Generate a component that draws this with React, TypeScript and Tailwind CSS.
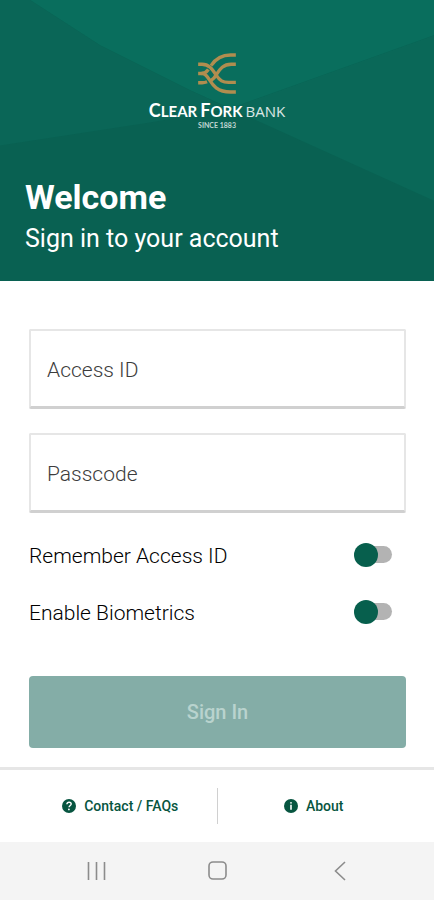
import { useState, type ReactNode } from "react"

type ToggleRowProps = {
  id: string
  label: string
}

function ForkMark() {
  return (
    <svg
      viewBox="0 0 114 124"
      className="h-[41px] w-[38px]"
      fill="none"
      stroke="#b08d4f"
      strokeWidth="10"
      aria-hidden="true"
    >
      <path d="M114 6H98C70 6 53 17 39 38" />
      <path d="M0 34H12C32 34 42 48 54 66C66 84 74 89 92 89H114" />
      <path d="M0 62H12C38 62 32 118 98 118H114" />
      <path d="M114 34H100C76 34 66 48 56 64C50 75 45 80 38 84" />
      <path d="M10 62C20 62 26 57 31 50" />
      <path d="M0 90H12C18 90 22 89 27 87" />
    </svg>
  )
}

function Logo() {
  return (
    <div className="flex flex-col items-center font-[Lato,sans-serif] text-white">
      <ForkMark />
      <p className="mt-[6px] flex items-baseline gap-[3px] text-[15px] leading-5 font-bold">
        <span>
          <span className="text-lg leading-5">C</span>LEAR
        </span>
        <span>
          <span className="text-lg leading-5">F</span>ORK
        </span>
        <span className="font-['Open_Sans',sans-serif] text-[15px] leading-5 font-normal text-white/85">BANK</span>
      </p>
      <p className="text-[7px] leading-2 font-bold text-white/75">SINCE 1883</p>
    </div>
  )
}

function Header() {
  return (
    <header className="relative bg-[#096152]">
      {/* Faceted backdrop */}
      <svg
        viewBox="0 0 434 280"
        preserveAspectRatio="none"
        className="absolute inset-0 h-full w-full"
        aria-hidden="true"
      >
        <path d="M434 35V200L230 108Z" fill="#0a6858" />
        <path d="M30 0H434V35L230 108L190 90L100 45Z" fill="#096e5d" />
        <path d="M0 0H30L100 45L190 90L230 108L150 122L0 145Z" fill="#0a6657" />
      </svg>
      <div className="relative px-[25px] pt-[53px] pb-[22px]">
        <Logo />
        <h1 className="mt-12 text-[34px] leading-10 font-bold text-white">Welcome</h1>
        <p className="mt-0.5 text-[25px] leading-10 text-white">Sign in to your account</p>
      </div>
    </header>
  )
}

function Field({ id, label, type }: { id: string; label: string; type: string }) {
  return (
    <div className="relative">
      <input
        id={id}
        type={type}
        placeholder=" "
        className="peer block h-20 w-full rounded-xs border-2 border-b-[3px] border-[#e6e6e6] border-b-[#d0d0d0] bg-white px-4 text-[21px] text-gray-900 outline-none"
      />
      <label
        htmlFor={id}
        className="pointer-events-none invisible absolute inset-0 flex items-center px-[18px] pt-1 text-[21px] font-light text-[#3c3c3c] peer-placeholder-shown:visible"
      >
        {label}
      </label>
    </div>
  )
}

function ToggleRow({ id, label }: ToggleRowProps) {
  const [on, setOn] = useState(false)

  return (
    <div className="flex h-[57px] items-center justify-between pr-3">
      <label htmlFor={id} className="pt-1 text-[21px] font-light text-black">
        {label}
      </label>
      <span className="relative flex h-6 w-10 items-center">
        <input
          id={id}
          type="checkbox"
          role="switch"
          checked={on}
          onChange={(e) => setOn(e.target.checked)}
          className="peer ml-1 h-[17px] w-[34px] appearance-none rounded-full bg-[#b3b3b3] checked:bg-[#84ada7]"
        />
        <span className="pointer-events-none absolute left-0 size-6 rounded-full bg-[#075f4d] peer-checked:left-4" />
      </span>
    </div>
  )
}

function FooterLink({ href, icon, children }: { href: string; icon: ReactNode; children: ReactNode }) {
  return (
    <a href={href} className="flex flex-1 items-center justify-center gap-2 text-[14px] font-medium text-[#075540]">
      {icon}
      {children}
    </a>
  )
}

function HelpIcon() {
  return (
    <svg viewBox="0 0 14 14" className="size-[14px]" fill="none" aria-hidden="true">
      <circle cx="7" cy="7" r="7" fill="#075540" />
      <path d="M4.9 5.3C5 3.9 5.9 3.2 7.1 3.2C8.3 3.2 9.2 3.9 9.2 5C9.2 6.4 7.1 6.6 7 8.3" stroke="white" strokeWidth="1.4" />
      <circle cx="6.9" cy="10.4" r="0.9" fill="white" />
    </svg>
  )
}

function InfoIcon() {
  return (
    <svg viewBox="0 0 14 14" className="size-[14px]" fill="none" aria-hidden="true">
      <circle cx="7" cy="7" r="7" fill="#075540" />
      <circle cx="7" cy="3.8" r="0.9" fill="white" />
      <path d="M7 5.7V10.8" stroke="white" strokeWidth="1.6" />
    </svg>
  )
}

function SystemNav() {
  return (
    <nav aria-label="System" className="flex h-[58px] items-center justify-around bg-[#f4f4f4] px-9 text-[#8c8c8c]">
      <button type="button" aria-label="Recent apps" className="p-2">
        <svg viewBox="0 0 20 20" className="size-5" fill="none" stroke="currentColor" strokeWidth="1.6" aria-hidden="true">
          <path d="M2.5 1V19M10.5 1V19M18.5 1V19" />
        </svg>
      </button>
      <button type="button" aria-label="Home" className="p-2">
        <svg viewBox="0 0 20 20" className="size-5" fill="none" stroke="currentColor" strokeWidth="1.6" aria-hidden="true">
          <rect x="2" y="1" width="17" height="17" rx="4" />
        </svg>
      </button>
      <button type="button" aria-label="Back" className="p-2">
        <svg viewBox="0 0 20 20" className="size-5" fill="none" stroke="currentColor" strokeWidth="1.6" aria-hidden="true">
          <path d="M17 1L7.5 10L17 19" />
        </svg>
      </button>
    </nav>
  )
}

export default function App() {
  return (
    <div className="flex min-h-screen flex-col bg-white font-[Roboto,sans-serif]">
      <Header />

      <main className="flex-1 px-7 pt-12 pb-[19px]">
        <form onSubmit={(e) => e.preventDefault()} className="pl-px">
          <div className="space-y-6">
            <Field id="access-id" label="Access ID" type="text" />
            <Field id="passcode" label="Passcode" type="password" />
          </div>
          <div className="mt-[13px]">
            <ToggleRow id="remember" label="Remember Access ID" />
            <ToggleRow id="biometrics" label="Enable Biometrics" />
          </div>
          <button
            type="submit"
            disabled
            className="mt-9 h-[72px] w-full rounded-sm bg-[#84ada7] text-xl font-medium text-[#b9d3ce]"
          >
            Sign In
          </button>
        </form>
      </main>

      <footer>
        <div className="flex h-[75px] items-center border-t-[3px] border-[#e6e6e6] px-6">
          <FooterLink href="#contact" icon={<HelpIcon />}>
            Contact / FAQs
          </FooterLink>
          <div className="h-9 w-px bg-[#d0d0d0]" />
          <FooterLink href="#about" icon={<InfoIcon />}>
            About
          </FooterLink>
        </div>
        <SystemNav />
      </footer>
    </div>
  )
}
